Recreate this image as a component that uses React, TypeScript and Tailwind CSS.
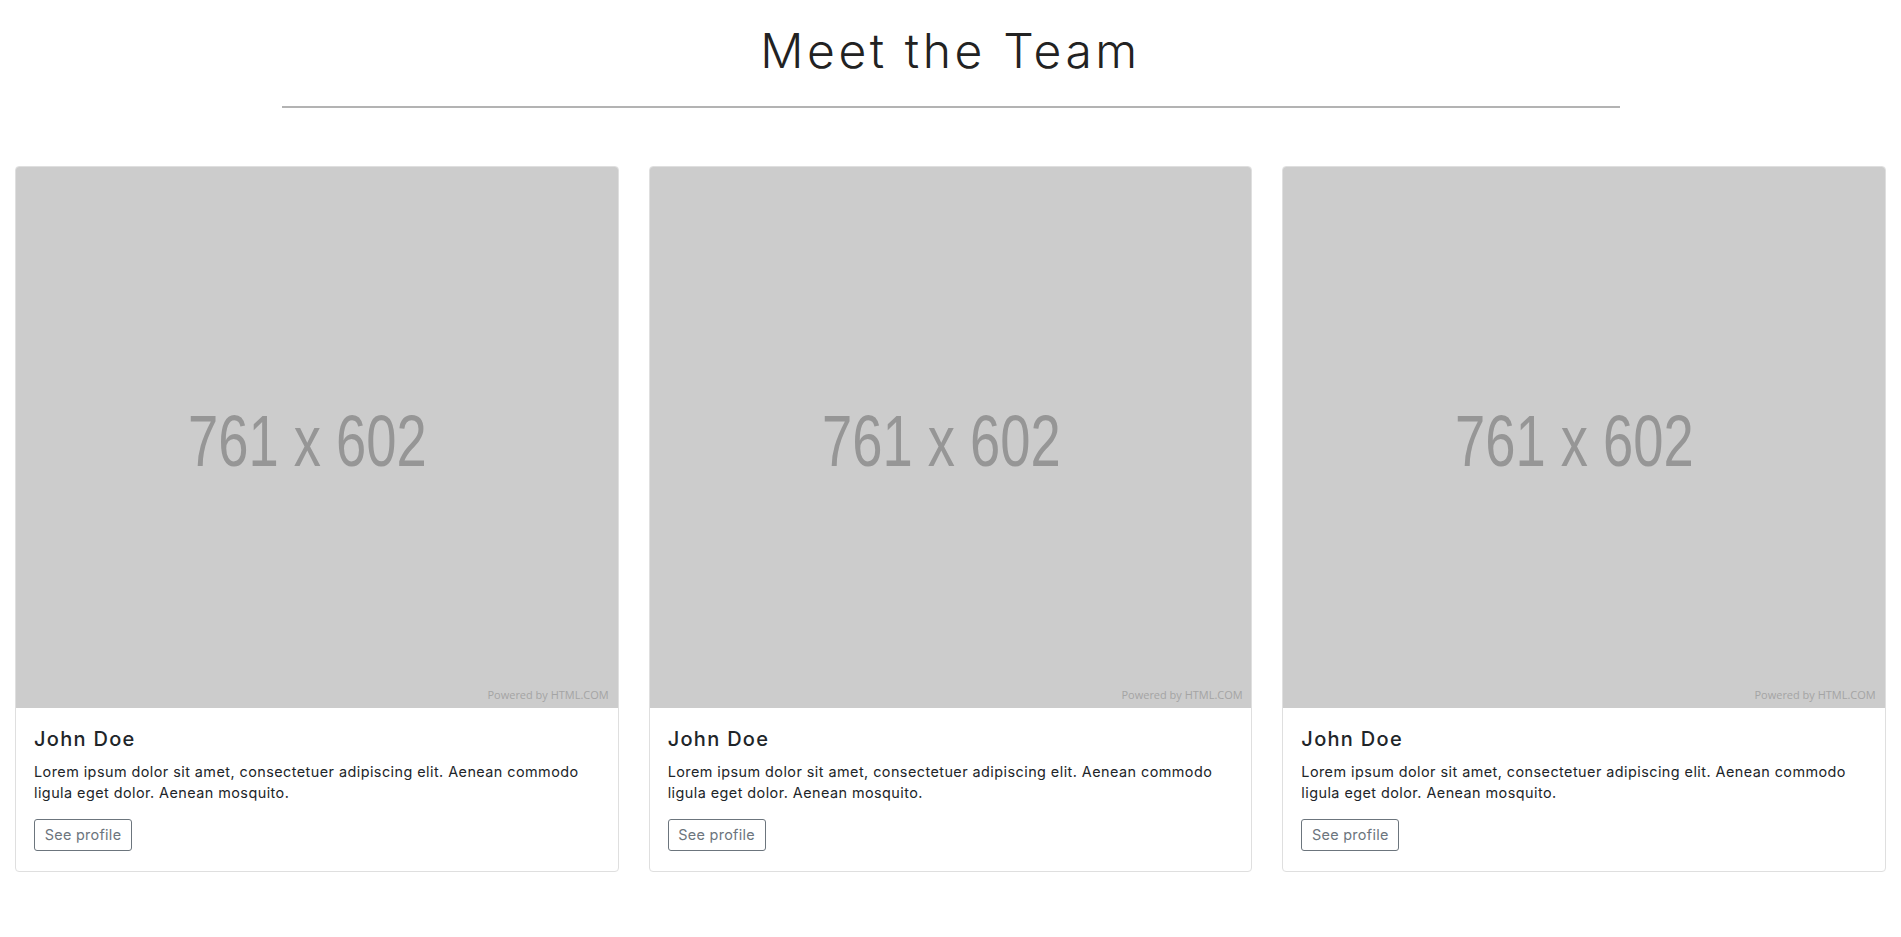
import React from "react";

function Placeholder() {
  return (
    <div className="h-[541px] w-full bg-[#cccccc] rounded-t-[3px] overflow-hidden">
      <svg className="block h-full w-full" viewBox="0 0 602 541" preserveAspectRatio="none">
        <text
          x={291.5 / 0.745}
          y="299"
          transform="scale(0.745 1)"
          textAnchor="middle"
          fontSize="73"
          fill="#969696"
          fontFamily="'Liberation Sans', Arial, sans-serif"
        >
          761 x 602
        </text>
        <text
          x="593"
          y="532"
          textAnchor="end"
          fontSize="11"
          fill="#a4a4a4"
          fontFamily="'Open Sans', sans-serif"
        >
          Powered by HTML.COM
        </text>
      </svg>
    </div>
  );
}

function Card() {
  return (
    <div className="flex flex-col rounded-[4px] border border-[#dfdfdf] bg-white">
      <Placeholder />
      <div className="px-[18px] pt-[19px] pb-[20px]">
        <h5 className="mb-[10px] text-[20px] leading-[24px] font-medium text-[#212529] tracking-[1.3px]">
          John Doe
        </h5>
        <p className="mb-[15px] text-[14.4px] leading-[21.6px] text-[#212529] tracking-[0.45px]">
          Lorem ipsum dolor sit amet, consectetuer adipiscing elit. Aenean commodo
          <br />
          ligula eget dolor. Aenean mosquito.
        </p>
        <button className="flex h-[32px] w-[98px] items-center justify-center rounded-[3px] border border-[#6c757d] text-[14.4px] leading-[21.6px] text-[#6c757d] tracking-[0.3px]">
          See profile
        </button>
      </div>
    </div>
  );
}

export default function App() {
  return (
    <div className="min-h-screen bg-white font-['Inter','Noto_Sans',sans-serif] text-[#212529]">
      <h1 className="pt-[22px] text-center text-[48px] leading-[57.6px] font-light text-[#222222] tracking-[3.6px]">
        Meet the Team
      </h1>
      <div className="mx-auto mt-[26px] h-[2px] w-[1338px] bg-[#b3b3b3]" />
      <div className="mt-[58px] grid grid-cols-3 gap-[30px] px-[15px]">
        <Card />
        <Card />
        <Card />
      </div>
    </div>
  );
}
